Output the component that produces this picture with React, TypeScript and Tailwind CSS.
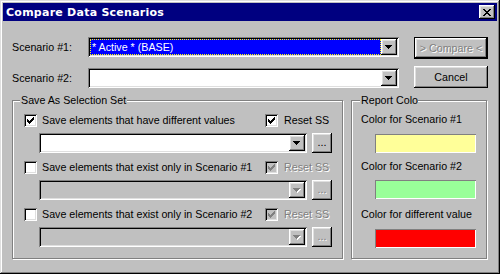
import React from "react";

const raised = "shadow-[inset_-1px_-1px_#000,inset_1px_1px_#fff,inset_-2px_-2px_#808080,inset_2px_2px_#dfdfdf]";
const sunken = "shadow-[inset_1px_1px_#808080,inset_-1px_-1px_#fff,inset_2px_2px_#000,inset_-2px_-2px_#dfdfdf]";
const etched = "border border-[#808080] shadow-[inset_1px_1px_#fff,1px_1px_#fff]";
const grayText = "text-[#808080] [text-shadow:1px_1px_0_#fff]";

function Arrow({ disabled }: { disabled?: boolean }) {
    return (
        <svg width="8" height="5" viewBox="0 0 8 5" shapeRendering="crispEdges">
            {disabled && <path d="M1 1h7v1h-7z M2 2h5v1h-5z M3 3h3v1h-3z M4 4h1v1h-1z" fill="#fff" />}
            <path d="M0 0h7v1h-7z M1 1h5v1h-5z M2 2h3v1h-3z M3 3h1v1h-1z" fill={disabled ? "#808080" : "#000"} />
        </svg>
    );
}

function Combo({ width, disabled, children }: { width: string; disabled?: boolean; children?: React.ReactNode }) {
    return (
        <div className={`${width} h-[20px] p-[2px] flex ${sunken} ${disabled ? "bg-[#c0c0c0]" : "bg-white"}`}>
            <div className="flex-1 flex items-center min-w-0">{children}</div>
            <div className={`w-[16px] h-[16px] bg-[#c0c0c0] flex items-center justify-center ${raised}`}>
                <Arrow disabled={disabled} />
            </div>
        </div>
    );
}

function Check({ checked, disabled }: { checked?: boolean; disabled?: boolean }) {
    return (
        <div className={`w-[13px] h-[13px] shrink-0 flex items-center justify-center ${sunken} ${disabled ? "bg-[#c0c0c0]" : "bg-white"}`}>
            {checked && (
                <svg width="7" height="7" viewBox="0 0 7 7" shapeRendering="crispEdges">
                    <path
                        d="M6 0h1v1h-1z M5 1h2v1h-2z M0 2h1v1h-1z M4 2h3v1h-3z M0 3h2v1h-2z M3 3h3v1h-3z M0 4h5v1h-5z M1 5h3v1h-3z M2 6h1v1h-1z"
                        fill={disabled ? "#808080" : "#000"}
                    />
                </svg>
            )}
        </div>
    );
}

function DotsButton({ disabled }: { disabled?: boolean }) {
    return (
        <div className={`w-[20px] h-[20px] bg-[#c0c0c0] flex items-center justify-center leading-none pb-[2px] ${raised} ${disabled ? grayText : "text-black"}`}>
            ...
        </div>
    );
}

function SaveRow({ label, checked, disabled }: { label: string; checked?: boolean; disabled?: boolean }) {
    return (
        <div>
            <div className="flex items-center h-[13px]">
                <div className="w-[241px] flex items-center gap-[5px]">
                    <Check checked={checked} />
                    <span className="whitespace-nowrap leading-[13px]">{label}</span>
                </div>
                <div className="flex items-center gap-[6px]">
                    <Check checked disabled={disabled} />
                    <span className={`leading-[13px] ${disabled ? grayText : ""}`}>Reset SS</span>
                </div>
            </div>
            <div className="flex items-center gap-[5px] mt-[6px] ml-[15px]">
                <Combo width="w-[268px]" disabled={disabled} />
                <DotsButton disabled={disabled} />
            </div>
        </div>
    );
}

export default function App() {
    return (
        <div className="w-[500px] h-[274px] bg-[#c0c0c0] p-[3px] flex flex-col text-[10.7px] text-black shadow-[inset_-1px_-1px_#000,inset_1px_1px_#dfdfdf,inset_-2px_-2px_#808080,inset_2px_2px_#fff] font-['Liberation_Sans',Arial,sans-serif]">
            {/* title bar */}
            <div className="h-[18px] bg-[#000080] flex items-center justify-between pl-[3px] pr-[2px]">
                <span className="text-white font-bold text-[11px] tracking-[0.25px] font-['DejaVu_Sans',Verdana,sans-serif] leading-none">
                    Compare Data Scenarios
                </span>
                <div className={`w-[16px] h-[14px] bg-[#c0c0c0] flex items-center justify-center ${raised}`}>
                    <svg width="8" height="7" viewBox="0 0 8 7" shapeRendering="crispEdges">
                        <path
                            d="M0 0h2v1h-2z M6 0h2v1h-2z M1 1h2v1h-2z M5 1h2v1h-2z M2 2h4v1h-4z M3 3h2v1h-2z M2 4h4v1h-4z M1 5h2v1h-2z M5 5h2v1h-2z M0 6h2v1h-2z M6 6h2v1h-2z"
                            fill="#000"
                        />
                    </svg>
                </div>
            </div>

            <div className="pl-[9px]">
                {/* scenario rows */}
                <div className="flex items-start mt-[16px]">
                    <span className="w-[76px] h-[20px] flex items-center">Scenario #1:</span>
                    <Combo width="w-[311px]">
                        <div className="flex-1 h-[16px] bg-[#0000ff] border border-dotted border-[#ffff00] flex items-center pl-[1px] text-white whitespace-nowrap">
                            * Active * (BASE)
                        </div>
                    </Combo>
                    <div className="ml-[15px] w-[74px] h-[22px] border border-black">
                        <div className={`w-full h-full bg-[#c0c0c0] flex items-center justify-center ${raised} ${grayText}`}>
                            &gt; Compare &lt;
                        </div>
                    </div>
                </div>
                <div className="flex items-end mt-[7px]">
                    <span className="w-[76px] h-[20px] flex items-center">Scenario #2:</span>
                    <Combo width="w-[311px]" />
                    <div className={`ml-[15px] w-[74px] h-[22px] bg-[#c0c0c0] flex items-center justify-center ${raised}`}>
                        Cancel
                    </div>
                </div>

                {/* groups */}
                <div className="flex gap-[8px] mt-[12px]">
                    <div className={`relative w-[331px] h-[159px] pt-[13px] pl-[11px] ${etched}`}>
                        <span className="absolute left-[7px] top-[-8px] px-[1px] bg-[#c0c0c0] leading-[14px]">
                            Save As Selection Set
                        </span>
                        <div className="flex flex-col gap-[8px]">
                            <SaveRow label="Save elements that have different values" checked />
                            <SaveRow label="Save elements that exist only in Scenario #1" disabled />
                            <SaveRow label="Save elements that exist only in Scenario #2" disabled />
                        </div>
                    </div>

                    <div className={`relative w-[136px] h-[159px] pt-[12px] pl-[9px] ${etched}`}>
                        <span className="absolute left-[8px] top-[-8px] w-[58px] pl-[1px] overflow-hidden whitespace-nowrap bg-[#c0c0c0] leading-[14px]">
                            Report Color
                        </span>
                        <div className="leading-[13px] whitespace-nowrap">Color for Scenario #1</div>
                        <div className="ml-[14px] mt-[8px] w-[101px] h-[19px] bg-[#ffff99] shadow-[inset_1px_1px_#808080,inset_-1px_-1px_#fff]" />
                        <div className="mt-[7px] leading-[13px] whitespace-nowrap">Color for Scenario #2</div>
                        <div className="ml-[14px] mt-[7px] w-[101px] h-[19px] bg-[#99ff99] shadow-[inset_1px_1px_#808080,inset_-1px_-1px_#fff]" />
                        <div className="mt-[9px] leading-[13px] whitespace-nowrap">Color for different value</div>
                        <div className="ml-[14px] mt-[8px] w-[101px] h-[19px] bg-[#ff0000] shadow-[inset_1px_1px_#808080,inset_-1px_-1px_#fff]" />
                    </div>
                </div>
            </div>
        </div>
    );
}
